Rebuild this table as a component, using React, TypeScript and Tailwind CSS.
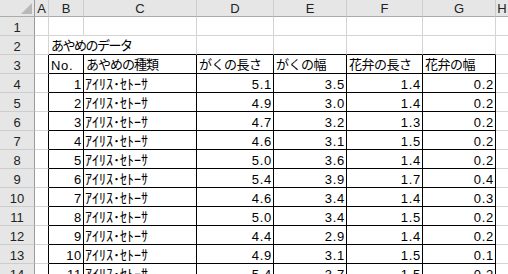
const cols = ['A', 'B', 'C', 'D', 'E', 'F', 'G', 'H'];

const rows = [
  [1, '5.1', '3.5', '1.4', '0.2'],
  [2, '4.9', '3.0', '1.4', '0.2'],
  [3, '4.7', '3.2', '1.3', '0.2'],
  [4, '4.6', '3.1', '1.5', '0.2'],
  [5, '5.0', '3.6', '1.4', '0.2'],
  [6, '5.4', '3.9', '1.7', '0.4'],
  [7, '4.6', '3.4', '1.4', '0.3'],
  [8, '5.0', '3.4', '1.5', '0.2'],
  [9, '4.4', '2.9', '1.4', '0.2'],
  [10, '4.9', '3.1', '1.5', '0.1'],
  [11, '5.4', '3.7', '1.5', '0.2'],
];

const heads = ['がくの長さ', 'がくの幅', '花弁の長さ', '花弁の幅'];

// text styles
const num = 'text-[13px] leading-[15px] pt-[3px] tracking-[0.7px]';
const jp = "font-['Noto_Sans_CJK_JP',sans-serif] text-[13px] leading-[14px] pt-[2px] tracking-[-0.5px]";
const kana = "font-['Noto_Sans_CJK_JP',sans-serif] text-[14px] leading-[14px] pt-[2px]";

function RowHead({ n }: { n: number }) {
  return (
    <div className="text-center bg-[#e6e6e6] border-r border-r-[#9b9b9b] border-b border-b-[#cdcdcd] text-[13px] leading-[15px] pt-[3px] text-[#222]">
      {n}
    </div>
  );
}

function Cell({ className = '', children }: { className?: string; children?: React.ReactNode }) {
  return <div className={`px-[2px] overflow-hidden whitespace-nowrap ${className}`}>{children}</div>;
}

export default function App() {
  return (
    <div className="w-[508px] h-[274px] overflow-hidden bg-white font-['Liberation_Sans',sans-serif] text-black">
      <div className="grid grid-cols-[35px_14px_35px_113px_77px_73px_76px_73px_13px] auto-rows-[19px] [grid-template-rows:17px]">
        {/* column headers */}
        <div className="relative bg-[#e6e6e6] border-r border-r-[#9b9b9b] border-b border-b-[#ababab]">
          <div className="absolute right-[2px] bottom-[2px] w-0 h-0 border-l-[11px] border-l-transparent border-b-[11px] border-b-[#b8b8b8]" />
        </div>
        {cols.map((c) => (
          <div key={c} className="text-center bg-[#e6e6e6] border-r border-r-[#cdcdcd] border-b border-b-[#ababab] text-[13px] leading-[15px] pt-[1px] text-[#222]">
            {c}
          </div>
        ))}

        {/* row 1 */}
        <RowHead n={1} />
        {cols.map((c) => (
          <Cell key={c} className="border-r border-b border-[#d4d4d4]" />
        ))}

        {/* row 2 */}
        <RowHead n={2} />
        <Cell className="border-r border-b border-[#d4d4d4]" />
        <Cell className={`border-b border-b-black overflow-visible relative z-10 ${jp} tracking-[-1.5px]`}>あやめのデータ</Cell>
        <Cell className="border-r border-r-[#d4d4d4] border-b border-b-black" />
        <Cell className="border-r border-r-[#d4d4d4] border-b border-b-black" />
        <Cell className="border-r border-r-[#d4d4d4] border-b border-b-black" />
        <Cell className="border-r border-r-[#d4d4d4] border-b border-b-black" />
        <Cell className="border-r border-r-[#d4d4d4] border-b border-b-black" />
        <Cell className="border-r border-b border-[#d4d4d4]" />

        {/* row 3 headers */}
        <RowHead n={3} />
        <Cell className="border-r border-r-black border-b border-b-[#d4d4d4]" />
        <Cell className={`border-r border-b border-black ${num}`}>No.</Cell>
        <Cell className={`border-r border-b border-black ${jp} tracking-[-1px]`}>あやめの種類</Cell>
        {heads.map((h) => (
          <Cell key={h} className={`border-r border-b border-black ${jp}`}>
            {h}
          </Cell>
        ))}
        <Cell className="border-r border-b border-[#d4d4d4]" />

        {rows.map((r, i) => (
          <div key={i} className="contents">
            <RowHead n={i + 4} />
            <Cell className="border-r border-r-black border-b border-b-[#d4d4d4]" />
            <Cell className={`text-right pr-[1px] border-r border-b border-black ${num}`}>{r[0]}</Cell>
            <Cell className={`pl-[1px] border-r border-b border-black ${kana}`}>ｱｲﾘｽ･ｾﾄｰｻ</Cell>
            {r.slice(1).map((v, j) => (
              <Cell key={j} className={`text-right pr-[1px] border-r border-b border-black ${num}`}>
                {v}
              </Cell>
            ))}
            <Cell className="border-r border-b border-[#d4d4d4]" />
          </div>
        ))}
      </div>
    </div>
  );
}
